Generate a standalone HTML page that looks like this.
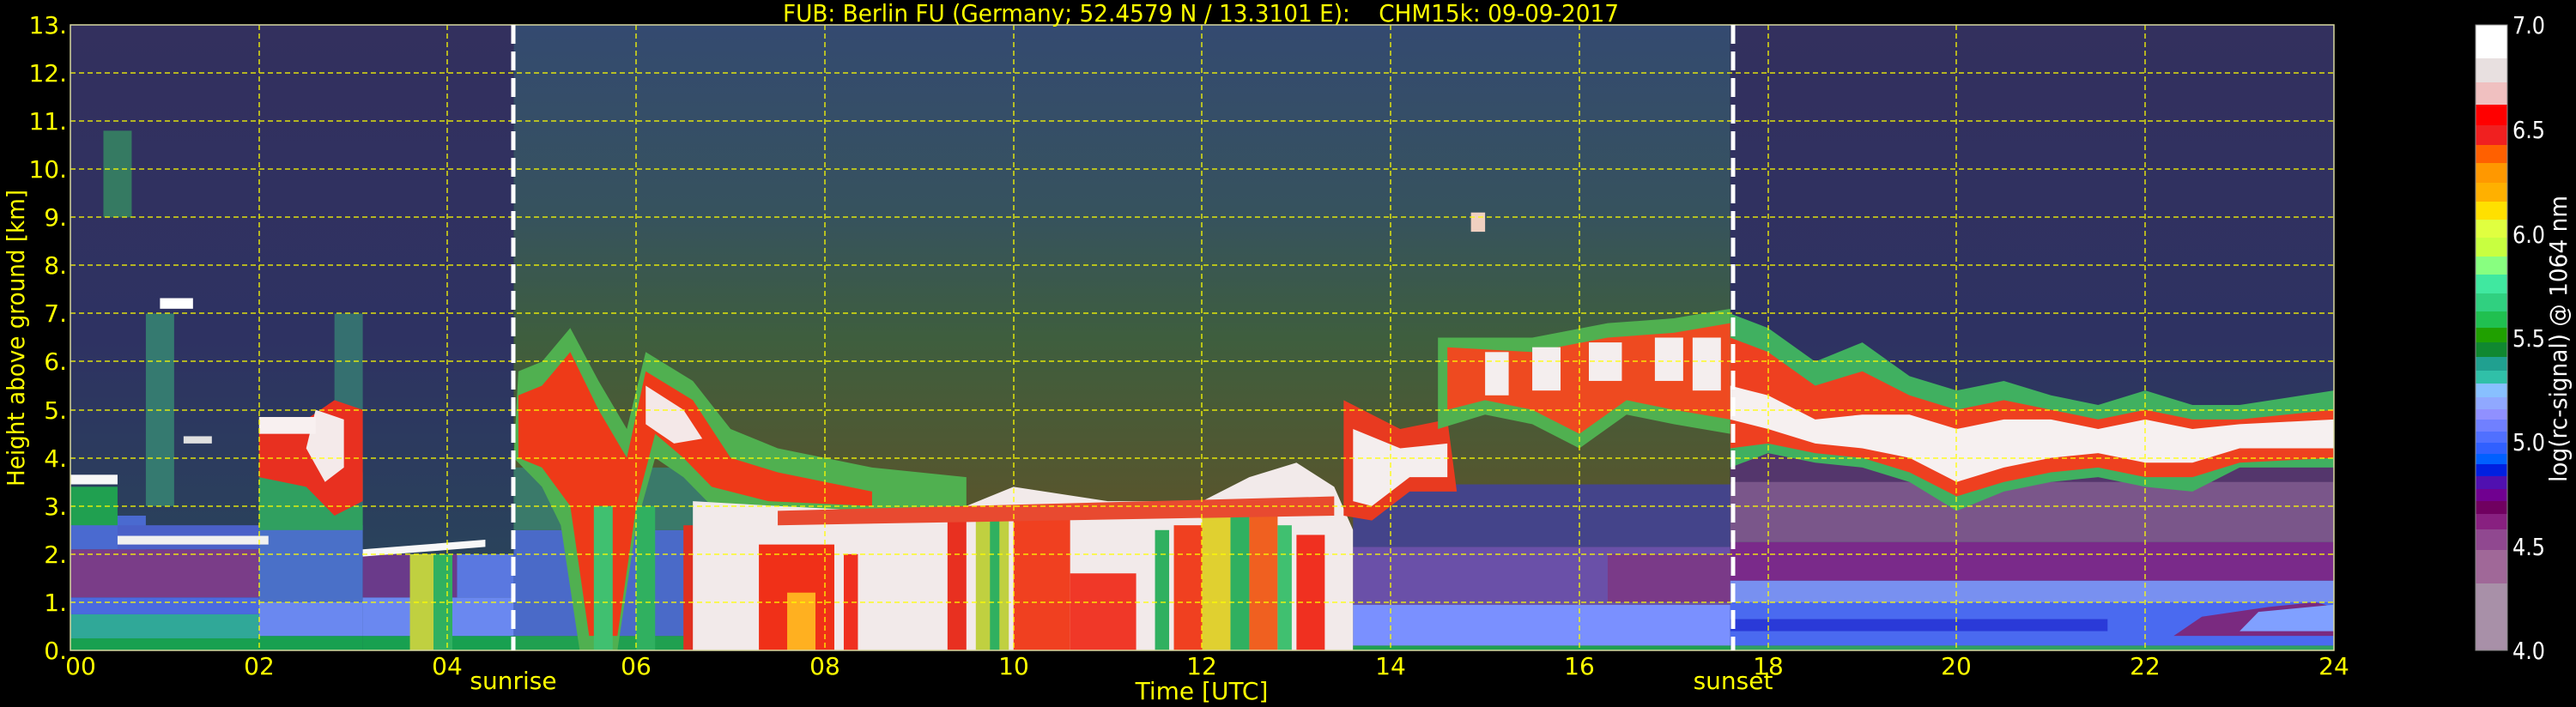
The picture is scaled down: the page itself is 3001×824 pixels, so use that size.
<!DOCTYPE html>
<html><head><meta charset="utf-8"><style>html,body{margin:0;padding:0;background:#000;}svg{display:block}</style></head>
<body>
<svg width="3001" height="824" viewBox="0 0 3001 824" xmlns="http://www.w3.org/2000/svg" font-family="DejaVu Sans, Liberation Sans, sans-serif">
<defs>
<linearGradient id="night" x1="0" y1="1" x2="0" y2="0">
<stop offset="0" stop-color="#33305e"/><stop offset="0.5" stop-color="#2e3262"/><stop offset="1" stop-color="#284a58"/></linearGradient>
<linearGradient id="day" x1="0" y1="1" x2="0" y2="0">
<stop offset="0" stop-color="#344a70"/><stop offset="0.3" stop-color="#36525e"/><stop offset="0.5" stop-color="#3e5e3e"/><stop offset="0.75" stop-color="#56562e"/><stop offset="1" stop-color="#624c2e"/></linearGradient>
</defs>
<rect width="3001" height="824" fill="#000"/>
<g transform="translate(82,758) scale(109.875,-56.08)">
<rect x="0" y="0" width="4.7" height="13" fill="url(#night)"/>
<rect x="4.7" y="0" width="12.9" height="13" fill="url(#day)"/>
<rect x="17.6" y="0" width="6.4" height="13" fill="url(#night)"/>
<rect x="0" y="0" width="2" height="0.25" fill="#18a050"/>
<rect x="0" y="0.25" width="2" height="0.5" fill="#30a898"/>
<rect x="0" y="0.75" width="2" height="0.35" fill="#4a6ae0"/>
<rect x="0" y="1.1" width="2" height="1.0" fill="#7a3d88"/>
<rect x="0" y="2.1" width="0.8" height="0.7" fill="#4a6ad0"/>
<rect x="0" y="2.6" width="0.5" height="0.8" fill="#20a050"/>
<rect x="0.5" y="2.1" width="1.5" height="0.5" fill="#4a60c8"/>
<rect x="2" y="0" width="1.1" height="0.3" fill="#18a050"/>
<rect x="2" y="0.3" width="1.1" height="0.7" fill="#6a88f0"/>
<rect x="2" y="1.0" width="1.1" height="1.6" fill="#4a70c8"/>
<rect x="2" y="2.5" width="1.1" height="1.2" fill="#30a060"/>
<rect x="3.1" y="0" width="1.6" height="0.3" fill="#18a050"/>
<rect x="3.1" y="0.3" width="1.6" height="0.8" fill="#6a88f0"/>
<rect x="3.1" y="1.1" width="1.0" height="0.9" fill="#6a3a8a"/>
<rect x="4.1" y="1.1" width="0.6" height="0.9" fill="#5a78e0"/>
<rect x="3.6" y="0" width="0.25" height="2" fill="#c0d040"/>
<rect x="3.85" y="0" width="0.2" height="2" fill="#30b060"/>
<rect x="0.8" y="3" width="0.3" height="4" fill="#357a70"/>
<rect x="0.35" y="9" width="0.3" height="1.8" fill="#357a62"/>
<rect x="2.8" y="3" width="0.3" height="4" fill="#357070"/>
<polygon points="2,3.6 2,4.5 2.5,4.8 2.8,5.2 3.1,5.0 3.1,3.1 2.8,2.8 2.5,3.4" fill="#e83020"/>
<polygon points="2.5,4.2 2.6,5.0 2.9,4.8 2.9,3.8 2.7,3.5" fill="#f4eaea"/>
<rect x="2" y="4.5" width="0.6" height="0.35" fill="#f8f0f0"/>
<rect x="0" y="3.45" width="0.5" height="0.2" fill="#f8f8f8"/>
<rect x="0.5" y="2.2" width="1.6" height="0.18" fill="#f0f0f0"/>
<polygon points="3.1,1.95 4.4,2.15 4.4,2.3 3.1,2.1" fill="#f8f8f8"/>
<rect x="0.95" y="7.1" width="0.35" height="0.22" fill="#ffffff"/>
<rect x="1.2" y="4.3" width="0.3" height="0.15" fill="#e0e0e0"/>
<rect x="4.7" y="0" width="2.6" height="0.3" fill="#20a050"/>
<rect x="4.7" y="0.3" width="2.6" height="2.2" fill="#4a6ac8"/>
<rect x="4.7" y="2.5" width="2.6" height="1.3" fill="#3a7a6a"/>
<polygon points="4.7,4.0 4.75,5.8 5.0,6.0 5.3,6.7 5.6,5.6 5.9,4.6 6.1,6.2 6.6,5.6 7.0,4.6 7.5,4.2 8.5,3.8 9.5,3.6 9.5,2.6 7.4,2.7 6.8,3.0 6.5,3.6 6.2,4.0 6.0,2.6 5.8,0 5.4,0 5.2,2.6 5.0,3.4" fill="#50b050"/>
<polygon points="4.75,4.0 4.75,5.3 5.0,5.5 5.3,6.2 5.6,5.0 5.9,4.0 6.1,5.8 6.6,5.2 7.0,4.0 7.5,3.7 8.5,3.3 8.5,3.0 7.4,3.1 6.8,3.4 6.5,4.0 6.2,4.5 6.0,3.0 5.8,0.3 5.5,0.3 5.3,3.0 5.0,3.8" fill="#ee3a18"/>
<polygon points="6.1,5.5 6.5,5.0 6.7,4.4 6.4,4.3 6.1,4.7" fill="#f4e8e8"/>
<rect x="5.55" y="0" width="0.2" height="3" fill="#40c070"/>
<rect x="6.0" y="0" width="0.2" height="3" fill="#30b060"/>
<rect x="6.5" y="0" width="0.25" height="2.6" fill="#e03020"/>
<polygon points="6.6,0 6.6,3.1 7.5,3.0 8.5,2.9 9.5,3.0 10,3.4 11,3.1 12,3.1 12.5,3.6 13,3.9 13.4,3.4 13.6,2.5 13.6,0" fill="#f2eaea"/>
<rect x="7.3" y="0" width="0.8" height="2.2" fill="#f03018"/>
<rect x="7.6" y="0" width="0.3" height="1.2" fill="#ffb020"/>
<rect x="8.2" y="0" width="0.15" height="2" fill="#f03020"/>
<rect x="9.3" y="0" width="0.2" height="2.7" fill="#e83020"/>
<rect x="9.6" y="0" width="0.35" height="3" fill="#c0d040"/>
<rect x="9.75" y="0" width="0.1" height="3" fill="#30b060"/>
<rect x="10.0" y="0" width="0.6" height="2.8" fill="#f04020"/>
<rect x="10.6" y="0" width="0.7" height="1.6" fill="#f03828"/>
<rect x="11.5" y="0" width="0.15" height="2.5" fill="#30b060"/>
<rect x="11.7" y="0" width="0.3" height="2.6" fill="#f04020"/>
<rect x="12.0" y="0" width="0.3" height="2.8" fill="#e0d030"/>
<rect x="12.3" y="0" width="0.2" height="2.8" fill="#30b060"/>
<rect x="12.5" y="0" width="0.3" height="2.8" fill="#f06020"/>
<rect x="12.8" y="0" width="0.15" height="2.6" fill="#40c070"/>
<rect x="13.0" y="0" width="0.3" height="2.4" fill="#f03020"/>
<polygon points="7.5,2.9 13.4,3.2 13.4,2.8 7.5,2.6" fill="#e84a30"/>
<rect x="13.6" y="0" width="4" height="0.1" fill="#20a050"/>
<rect x="13.6" y="0.1" width="4" height="0.85" fill="#7a90ff"/>
<rect x="13.6" y="0.95" width="4" height="1.2" fill="#6a50a8"/>
<rect x="13.6" y="2.15" width="4" height="1.3" fill="#44448a"/>
<rect x="16.3" y="1.0" width="1.3" height="1.0" fill="#7a3a88"/>
<polygon points="13.5,2.8 13.5,5.2 14.1,4.6 14.6,4.8 14.7,3.3 14.2,3.3 13.8,2.7" fill="#e83a20"/>
<polygon points="13.6,3.1 13.6,4.6 14.1,4.2 14.6,4.3 14.6,3.6 14.2,3.6 13.8,3.0" fill="#f4eeee"/>
<polygon points="14.5,4.6 14.5,6.5 15.5,6.5 16.3,6.8 17,6.9 17.6,7.1 17.6,4.5 17,4.7 16.5,4.9 16,4.2 15.5,4.7 15,4.9" fill="#50b050"/>
<polygon points="14.6,5.0 14.6,6.3 15.5,6.2 16.3,6.5 17,6.6 17.6,6.8 17.6,4.8 17,5.0 16.5,5.2 16,4.5 15.5,5.0 15,5.2" fill="#ee4a20"/>
<rect x="15.0" y="5.3" width="0.25" height="0.9" fill="#f4eeee"/>
<rect x="15.5" y="5.4" width="0.3" height="0.9" fill="#f4eeee"/>
<rect x="16.1" y="5.6" width="0.35" height="0.8" fill="#f4eeee"/>
<rect x="16.8" y="5.6" width="0.3" height="0.9" fill="#f4eeee"/>
<rect x="17.2" y="5.4" width="0.3" height="1.1" fill="#f4eeee"/>
<rect x="14.85" y="8.7" width="0.15" height="0.4" fill="#f0d0c0"/>
<rect x="17.6" y="0" width="6.4" height="0.1" fill="#30a060"/>
<rect x="17.6" y="0.1" width="6.4" height="0.9" fill="#4a6af0"/>
<rect x="17.6" y="0.4" width="4" height="0.25" fill="#2a3ad8"/>
<rect x="17.6" y="1.0" width="6.4" height="0.45" fill="#7890f0"/>
<rect x="17.6" y="1.45" width="6.4" height="0.8" fill="#7a2a8a"/>
<rect x="17.6" y="2.25" width="6.4" height="1.3" fill="#7a568a"/>
<rect x="17.6" y="3.5" width="6.4" height="0.7" fill="#54366c"/>
<polygon points="22.3,0.3 22.6,0.7 23.3,0.9 23.8,1.0 24,0.9 24,0.3" fill="#7a2a80"/>
<polygon points="23.0,0.4 23.2,0.8 24,0.95 24,0.4" fill="#80a0ff"/>
<polygon points="17.6,3.8 17.6,7.0 18,6.7 18.5,6.0 19,6.4 19.5,5.7 20,5.4 20.5,5.6 21,5.3 21.5,5.1 22,5.4 22.5,5.1 23,5.1 24,5.4 24,3.8 23,3.8 22.5,3.3 22,3.4 21.5,3.6 21,3.5 20.5,3.3 20,2.9 19.5,3.5 19,3.8 18.5,3.9 18,4.1" fill="#40b060"/>
<polygon points="17.6,4.2 17.6,6.5 18,6.2 18.5,5.5 19,5.8 19.5,5.3 20,5.0 20.5,5.2 21,5.0 21.5,4.8 22,5.0 22.5,4.8 23,4.8 24,5.0 24,4.0 23,3.9 22.5,3.6 22,3.6 21.5,3.8 21,3.7 20.5,3.5 20,3.2 19.5,3.7 19,4.0 18.5,4.1 18,4.3" fill="#ee4020"/>
<polygon points="17.6,4.8 17.6,5.5 18,5.3 18.5,4.8 19,4.9 19.5,4.9 20,4.6 20.5,4.8 21,4.8 21.5,4.6 22,4.8 22.5,4.6 23,4.7 24,4.8 24,4.2 23,4.2 22.5,3.9 22,3.9 21.5,4.1 21,4.0 20.5,3.8 20,3.5 19.5,4.0 19,4.2 18.5,4.3 18,4.6" fill="#f6f0f0"/>
</g>
<g stroke="#ffff00" stroke-width="1.5" stroke-dasharray="6,4" opacity="0.85">
<line x1="82" y1="702" x2="2719" y2="702"/><line x1="82" y1="646" x2="2719" y2="646"/><line x1="82" y1="590" x2="2719" y2="590"/><line x1="82" y1="534" x2="2719" y2="534"/><line x1="82" y1="478" x2="2719" y2="478"/><line x1="82" y1="421" x2="2719" y2="421"/><line x1="82" y1="365" x2="2719" y2="365"/><line x1="82" y1="309" x2="2719" y2="309"/><line x1="82" y1="253" x2="2719" y2="253"/><line x1="82" y1="197" x2="2719" y2="197"/><line x1="82" y1="141" x2="2719" y2="141"/><line x1="82" y1="85" x2="2719" y2="85"/>
<line x1="302" y1="29" x2="302" y2="758"/><line x1="521" y1="29" x2="521" y2="758"/><line x1="741" y1="29" x2="741" y2="758"/><line x1="961" y1="29" x2="961" y2="758"/><line x1="1181" y1="29" x2="1181" y2="758"/><line x1="1400" y1="29" x2="1400" y2="758"/><line x1="1620" y1="29" x2="1620" y2="758"/><line x1="1840" y1="29" x2="1840" y2="758"/><line x1="2060" y1="29" x2="2060" y2="758"/><line x1="2279" y1="29" x2="2279" y2="758"/><line x1="2499" y1="29" x2="2499" y2="758"/>
</g>
<rect x="82" y="29" width="2637" height="729" fill="none" stroke="#d8d8a0" stroke-width="1.5"/>
<g stroke="#ffffff" stroke-width="5" stroke-dasharray="22,9">
<line x1="598" y1="29" x2="598" y2="758"/><line x1="2019" y1="29" x2="2019" y2="758"/>
</g>
<g fill="#ffff00" font-size="28">
<text x="1399" y="25" text-anchor="middle" textLength="974" lengthAdjust="spacingAndGlyphs">FUB: Berlin FU (Germany; 52.4579 N / 13.3101 E):&#160;&#160;&#160;&#160;CHM15k: 09-09-2017</text>
<g text-anchor="end">
<text x="78" y="768">0.</text><text x="78" y="712">1.</text><text x="78" y="656">2.</text><text x="78" y="600">3.</text><text x="78" y="544">4.</text><text x="78" y="488">5.</text><text x="78" y="431">6.</text><text x="78" y="375">7.</text><text x="78" y="319">8.</text><text x="78" y="263">9.</text><text x="78" y="207">10.</text><text x="78" y="151">11.</text><text x="78" y="95">12.</text><text x="78" y="39">13.</text>
</g>
<g text-anchor="middle">
<text x="94" y="786">00</text><text x="302" y="786">02</text><text x="521" y="786">04</text><text x="741" y="786">06</text><text x="961" y="786">08</text><text x="1181" y="786">10</text><text x="1400" y="786">12</text><text x="1620" y="786">14</text><text x="1840" y="786">16</text><text x="2060" y="786">18</text><text x="2279" y="786">20</text><text x="2499" y="786">22</text><text x="2719" y="786">24</text>
<text x="598" y="803">sunrise</text><text x="2019" y="803">sunset</text>
<text x="1400" y="815">Time [UTC]</text>
</g>
<text transform="translate(28,394) rotate(-90)" text-anchor="middle" textLength="346" lengthAdjust="spacingAndGlyphs">Height above ground [km]</text>
</g>
<g>
<rect x="2884" y="29" width="37" height="39" fill="#ffffff"/>
<rect x="2884" y="68" width="37" height="28" fill="#e8e0e0"/>
<rect x="2884" y="96" width="37" height="26" fill="#f0c0c0"/>
<rect x="2884" y="122" width="37" height="24" fill="#ff0000"/>
<rect x="2884" y="146" width="37" height="23" fill="#f02020"/>
<rect x="2884" y="169" width="37" height="21" fill="#ff6000"/>
<rect x="2884" y="190" width="37" height="23" fill="#ff9800"/>
<rect x="2884" y="213" width="37" height="22" fill="#ffb000"/>
<rect x="2884" y="235" width="37" height="21" fill="#ffe000"/>
<rect x="2884" y="256" width="37" height="21" fill="#e0ff40"/>
<rect x="2884" y="277" width="37" height="22" fill="#c8ff40"/>
<rect x="2884" y="299" width="37" height="21" fill="#88ff80"/>
<rect x="2884" y="320" width="37" height="22" fill="#40e8a0"/>
<rect x="2884" y="342" width="37" height="21" fill="#30d080"/>
<rect x="2884" y="363" width="37" height="19" fill="#20c050"/>
<rect x="2884" y="382" width="37" height="17" fill="#20a000"/>
<rect x="2884" y="399" width="37" height="17" fill="#108830"/>
<rect x="2884" y="416" width="37" height="16" fill="#20a090"/>
<rect x="2884" y="432" width="37" height="15" fill="#30c0a8"/>
<rect x="2884" y="447" width="37" height="16" fill="#88c0ff"/>
<rect x="2884" y="463" width="37" height="14" fill="#90a8ff"/>
<rect x="2884" y="477" width="37" height="12" fill="#9090ff"/>
<rect x="2884" y="489" width="37" height="14" fill="#7080ff"/>
<rect x="2884" y="503" width="37" height="13" fill="#5070ff"/>
<rect x="2884" y="516" width="37" height="13" fill="#3060ff"/>
<rect x="2884" y="529" width="37" height="12" fill="#0060ff"/>
<rect x="2884" y="541" width="37" height="14" fill="#0020e0"/>
<rect x="2884" y="555" width="37" height="15" fill="#5010b0"/>
<rect x="2884" y="570" width="37" height="14" fill="#700090"/>
<rect x="2884" y="584" width="37" height="15" fill="#700060"/>
<rect x="2884" y="599" width="37" height="18" fill="#882080"/>
<rect x="2884" y="617" width="37" height="24" fill="#904890"/>
<rect x="2884" y="641" width="37" height="39" fill="#a06898"/>
<rect x="2884" y="680" width="37" height="78" fill="#a890a8"/>
<rect x="2884" y="29" width="37" height="729" fill="none" stroke="#888" stroke-width="1"/>
</g>
<g fill="#ffffff" font-size="28">
<text x="2927" y="39" textLength="38" lengthAdjust="spacingAndGlyphs">7.0</text>
<text x="2927" y="161" textLength="38" lengthAdjust="spacingAndGlyphs">6.5</text>
<text x="2927" y="283" textLength="38" lengthAdjust="spacingAndGlyphs">6.0</text>
<text x="2927" y="404" textLength="38" lengthAdjust="spacingAndGlyphs">5.5</text>
<text x="2927" y="525" textLength="38" lengthAdjust="spacingAndGlyphs">5.0</text>
<text x="2927" y="647" textLength="38" lengthAdjust="spacingAndGlyphs">4.5</text>
<text x="2927" y="768" textLength="38" lengthAdjust="spacingAndGlyphs">4.0</text>
<text transform="translate(2990,395) rotate(-90)" text-anchor="middle" textLength="334" lengthAdjust="spacingAndGlyphs">log(rc-signal) @ 1064 nm</text>
</g>
</svg>
</body></html>
